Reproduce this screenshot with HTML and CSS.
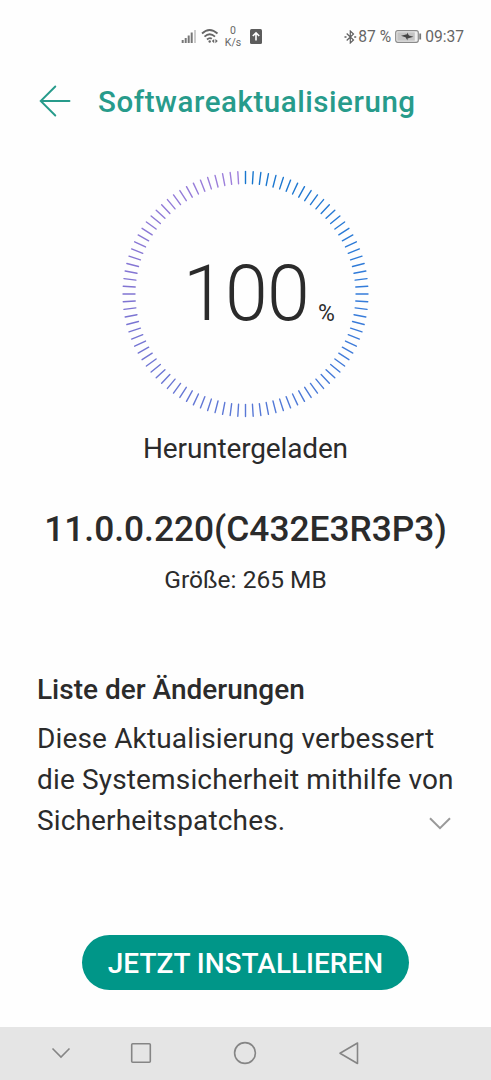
FILE: index.html
```html
<!DOCTYPE html>
<html lang="de">
<head>
  <meta charset="UTF-8" />
  <meta name="viewport" content="width=device-width, initial-scale=1.0" />
  <title>Softwareaktualisierung</title>
  <link rel="stylesheet" href="styles.css">
</head>
<body>
  <div class="status-bar">
    <div class="status-left">
      <svg class="signal" width="16" height="15" viewBox="0 0 16 15">
        <path d="M1.700 11v3M4.700 9v5M7.700 6.500v7.500M10.700 3.500v10.500" stroke="#777" stroke-width="2" />
        <path d="M14 1v13" stroke="#ccc" stroke-width="2" />
      </svg>
      <svg class="wifi" width="18" height="16" viewBox="0 0 18 16" fill="none" stroke="#666" stroke-width="1.800">
        <path d="M1 5.500Q8.500-1.600 16.500 5.500" />
        <path d="M3.500 8.700Q8.700 3.900 14 8.700" />
        <path d="M6 11.500Q8.700 9.200 10.800 10.800" />
        <circle cx="8.700" cy="13.500" r="1.200" fill="#666" stroke="none" />
        <path d="M13.200 11v4.200l-2.400-2.100zM14.400 11v4.200l2.400-2.100z" fill="#666" stroke="none" />
      </svg>
      <div class="speed"><span>0</span><span>K/s</span></div>
      <svg class="upload" width="12" height="15" viewBox="0 0 12 15">
        <rect width="12" height="15" rx="1.500" fill="#5c5c5c" />
        <path d="M6 11.500V4M2.800 7L6 3.800 9.200 7" fill="none" stroke="#fff" stroke-width="1.600" />
      </svg>
    </div>
    <div class="status-right">
      <svg class="bluetooth" width="13" height="14" viewBox="0 0 13 14" fill="none" stroke="#606060" stroke-width="1.200">
        <path d="M2.700 3.500L9.500 10 6.300 13V1L9.500 4 2.700 10.500" />
        <path d="M.5 7h2M10.200 7h2" stroke-width="1.600" />
      </svg>
      <span class="percent">87 %</span>
      <svg class="battery" width="27" height="13" viewBox="0 0 27 13">
        <rect x=".7" y=".7" width="22.600" height="11.600" rx="2" fill="#eee" stroke="#8a8a8a" stroke-width="1.200" />
        <rect x="2.300" y="2.300" width="17.500" height="8.400" fill="#c4c4c4" />
        <path d="M6 5.800l6-1.600V2.500l2 3 4.500 1.300-6 1.700v2l-2-3.200z" fill="#444" />
        <path d="M25.200 3.500v6" stroke="#777" stroke-width="1.800" />
      </svg>
      <span class="clock">09:37</span>
    </div>
  </div>

  <header>
    <svg class="back" width="32" height="32" viewBox="0 0 32 32">
      <path d="M30.500 16H1.700M16.300 1.500L1.700 16 16.300 30.500" />
    </svg>
    <h1>Softwareaktualisierung</h1>
  </header>

  <main>
    <div class="progress">
      <svg class="ring" id="ring" width="247" height="248" viewBox="-123.500 -124 247 248"></svg>
      <div class="value"><span class="number">100</span><span class="unit">%</span></div>
    </div>
    <p class="state">Heruntergeladen</p>
    <h2 class="version">11.0.0.220(C432E3R3P3)</h2>
    <p class="size">Größe: 265 MB</p>

    <section class="changes">
      <h3>Liste der Änderungen</h3>
      <div class="changes-text">
        <p>Diese Aktualisierung verbessert<br>die Systemsicherheit mithilfe von<br>Sicherheitspatches.</p>
        <svg class="expand" width="22" height="13" viewBox="0 0 22 13">
          <path d="M1 1.200l10 10 10-10" />
        </svg>
      </div>
    </section>

    <button class="install">JETZT INSTALLIEREN</button>
  </main>

  <nav>
    <svg width="20" height="20" viewBox="0 0 20 20"><path d="M1.500 5.500l8.500 8.500 8.500-8.500" /></svg>
    <svg width="22" height="22" viewBox="0 0 22 22"><rect x="1.700" y="1.700" width="18.600" height="18.600" rx="1" /></svg>
    <svg width="24" height="24" viewBox="0 0 24 24"><circle cx="12" cy="12" r="10.400" /></svg>
    <svg width="22" height="24" viewBox="0 0 22 24"><path d="M19.500 2v20.500L2 12.200z" stroke-linejoin="round" /></svg>
  </nav>

  <script>
    // colours around the ring, clockwise from the top
    const stops = [[22, 118, 206], [52, 124, 218], [88, 120, 214], [128, 116, 210], [160, 128, 220]];
    const ring = document.getElementById('ring');

    for (let i = 0; i < 100; i++) {
      const pos = i / 25;
      const from = stops[Math.floor(pos)];
      const to = stops[Math.floor(pos) + 1];
      const rgb = from.map((c, k) => Math.round(c + (to[k] - c) * (pos % 1)));
      const tick = document.createElementNS('http://www.w3.org/2000/svg', 'line');
      tick.setAttribute('y1', -122.5);
      tick.setAttribute('y2', -110.5);
      tick.setAttribute('stroke', `rgb(${rgb})`);
      tick.setAttribute('transform', `rotate(${i * 3.6})`);
      ring.appendChild(tick);
    }
  </script>
</body>
</html>
```
FILE: styles.css
```css
* {
  box-sizing: border-box;
}
body {
  margin: 0;
  height: 1080px;
  display: flex;
  flex-direction: column;
  font-family: Roboto, "Liberation Sans", sans-serif;
  background: #fefefe;
  color: #2b2b2b;
  overflow: hidden;
}
h1, h2, h3, p {
  margin: 0;
}
svg {
  display: block;
  flex: none;
}
.status-bar {
  height: 72px;
  padding: 0 27px 0 181px;
  display: flex;
  align-items: center;
  justify-content: space-between;
  color: #666;
}
.status-left, .status-right {
  display: flex;
  align-items: center;
}
.wifi {
  margin-left: 4px;
}
.speed {
  width: 16px;
  margin: 1px 9px 0 6px;
  display: flex;
  flex-direction: column;
  align-items: center;
  font-size: 10.5px;
  line-height: 12px;
}
.status-right {
  font-size: 15.6px;
  line-height: 20px;
  padding-top: 1px;
}
.bluetooth {
  margin-right: 1px;
}
.battery {
  margin: 0 3px 0 4px;
}
header {
  height: 58px;
  padding-left: 39px;
  display: flex;
  align-items: center;
  gap: 27px;
}
.back path {
  fill: none;
  stroke: #279b8b;
  stroke-width: 1.9;
  stroke-linecap: round;
}
h1 {
  padding-top: 2px;
  font-size: 29.5px;
  font-weight: 500;
  line-height: 40px;
  letter-spacing: 0.55px;
  color: #279b8b;
}
main {
  flex: 1;
  display: flex;
  flex-direction: column;
  align-items: center;
}
.progress {
  display: grid;
  width: 247px;
  height: 248px;
  margin-top: 40px;
}
.ring, .value {
  grid-area: 1 / 1;
}
.ring line {
  stroke-width: 1.4;
  stroke-linecap: round;
}
.value {
  display: flex;
  align-items: baseline;
  padding: 79px 0 0 61px;
}
.number {
  font-size: 77px;
  font-weight: 300;
  line-height: 90px;
  letter-spacing: -0.7px;
}
.unit {
  margin-left: 9px;
  font-size: 23px;
  line-height: 24px;
  transform: translateY(1px);
}
.state {
  margin-top: 13px;
  font-size: 28px;
  line-height: 36px;
  letter-spacing: -0.15px;
}
.version {
  margin-top: 38px;
  font-size: 35.3px;
  font-weight: 500;
  line-height: 48px;
}
.size {
  margin-top: 12px;
  font-size: 24.5px;
  line-height: 30px;
}
.changes {
  width: 100%;
  padding: 0 40px 0 37px;
  margin-top: 77px;
}
h3 {
  font-size: 28px;
  font-weight: 500;
  line-height: 36px;
}
.changes-text {
  display: flex;
  justify-content: space-between;
  align-items: flex-end;
  margin-top: 10px;
  font-size: 28px;
  line-height: 41px;
  letter-spacing: 0.15px;
  white-space: nowrap;
}
.changes-text p {
  width: 0;
}
.expand {
  margin-bottom: 11px;
}
.expand path {
  fill: none;
  stroke: #999;
  stroke-width: 2;
}
.install {
  width: 327px;
  height: 55px;
  margin-top: 94px;
  padding: 2px 0 0;
  border: none;
  border-radius: 28px;
  background: #009688;
  color: #fff;
  font-family: inherit;
  font-size: 28px;
  font-weight: 500;
}
nav {
  height: 53px;
  padding: 0 0 1px 51px;
  display: flex;
  align-items: center;
  gap: 81px;
  background: #e5e5e5;
}
nav svg:first-child {
  margin-right: -22px;
}
nav svg {
  fill: none;
  stroke: #858585;
  stroke-width: 1.6;
}
```
